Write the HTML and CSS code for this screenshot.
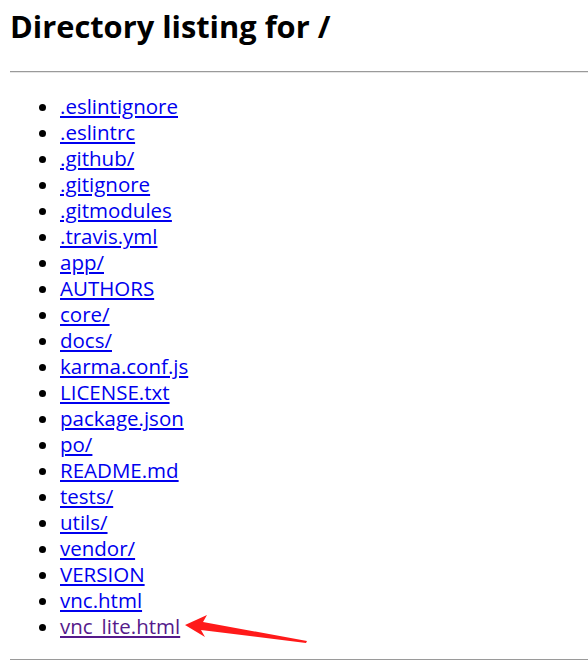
FILE: index.html
```html
<!DOCTYPE html>
<html lang="en">
<head>
    <meta charset="UTF-8">
    <title>Directory listing for /</title>
    <link rel="stylesheet" href="styles.css">
</head>
<body>
<h1>Directory listing for /</h1>
<hr>
<ul class="listing">
    <li><a href=".eslintignore">.eslintignore</a></li>
    <li><a href=".eslintrc">.eslintrc</a></li>
    <li><a href=".github/">.github/</a></li>
    <li><a href=".gitignore">.gitignore</a></li>
    <li><a href=".gitmodules">.gitmodules</a></li>
    <li><a href=".travis.yml">.travis.yml</a></li>
    <li><a href="app/">app/</a></li>
    <li><a href="AUTHORS">AUTHORS</a></li>
    <li><a href="core/">core/</a></li>
    <li><a href="docs/">docs/</a></li>
    <li><a href="karma.conf.js">karma.conf.js</a></li>
    <li><a href="LICENSE.txt">LICENSE.txt</a></li>
    <li><a href="package.json">package.json</a></li>
    <li><a href="po/">po/</a></li>
    <li><a href="README.md">README.md</a></li>
    <li><a href="tests/">tests/</a></li>
    <li><a href="utils/">utils/</a></li>
    <li><a href="vendor/">vendor/</a></li>
    <li><a href="VERSION">VERSION</a></li>
    <li><a href="vnc.html">vnc.html</a></li>
    <li class="marked">
        <a class="visited" href="vnc_lite.html">vnc_lite.html</a>
        <!-- annotation arrow -->
        <svg class="arrow" width="130" height="30" viewBox="0 0 130 30">
            <polygon points="0,10 22,0 18,7 122,26 121,28 16,15 20,22" fill="#ff1a1a"/>
        </svg>
    </li>
</ul>
<hr>
</body>
</html>
```

FILE: styles.css
```css
body {
    margin: 0 0 0 10px;
    font-family: "Open Sans", "Noto Sans", sans-serif;
    font-size: 20.5px;
    color: #000;
    background: #fff;
}

h1 {
    font-size: 30.8px;
    font-weight: 700;
    line-height: 40px;
    margin: 6px 0 25px;
}

hr {
    border: none;
    border-top: 1px solid #9a9a9a;
    border-bottom: 1px solid #e6e6e6;
    margin: 0;
}

.listing {
    margin: 20px 0 20px;
    padding-left: 50px;
    line-height: 26px;
}

a {
    color: #0000ee;
}

a.visited {
    color: #551a8b;
}

.marked {
    position: relative;
}

.arrow {
    position: absolute;
    left: 125px;
    top: 2px;
}
```
